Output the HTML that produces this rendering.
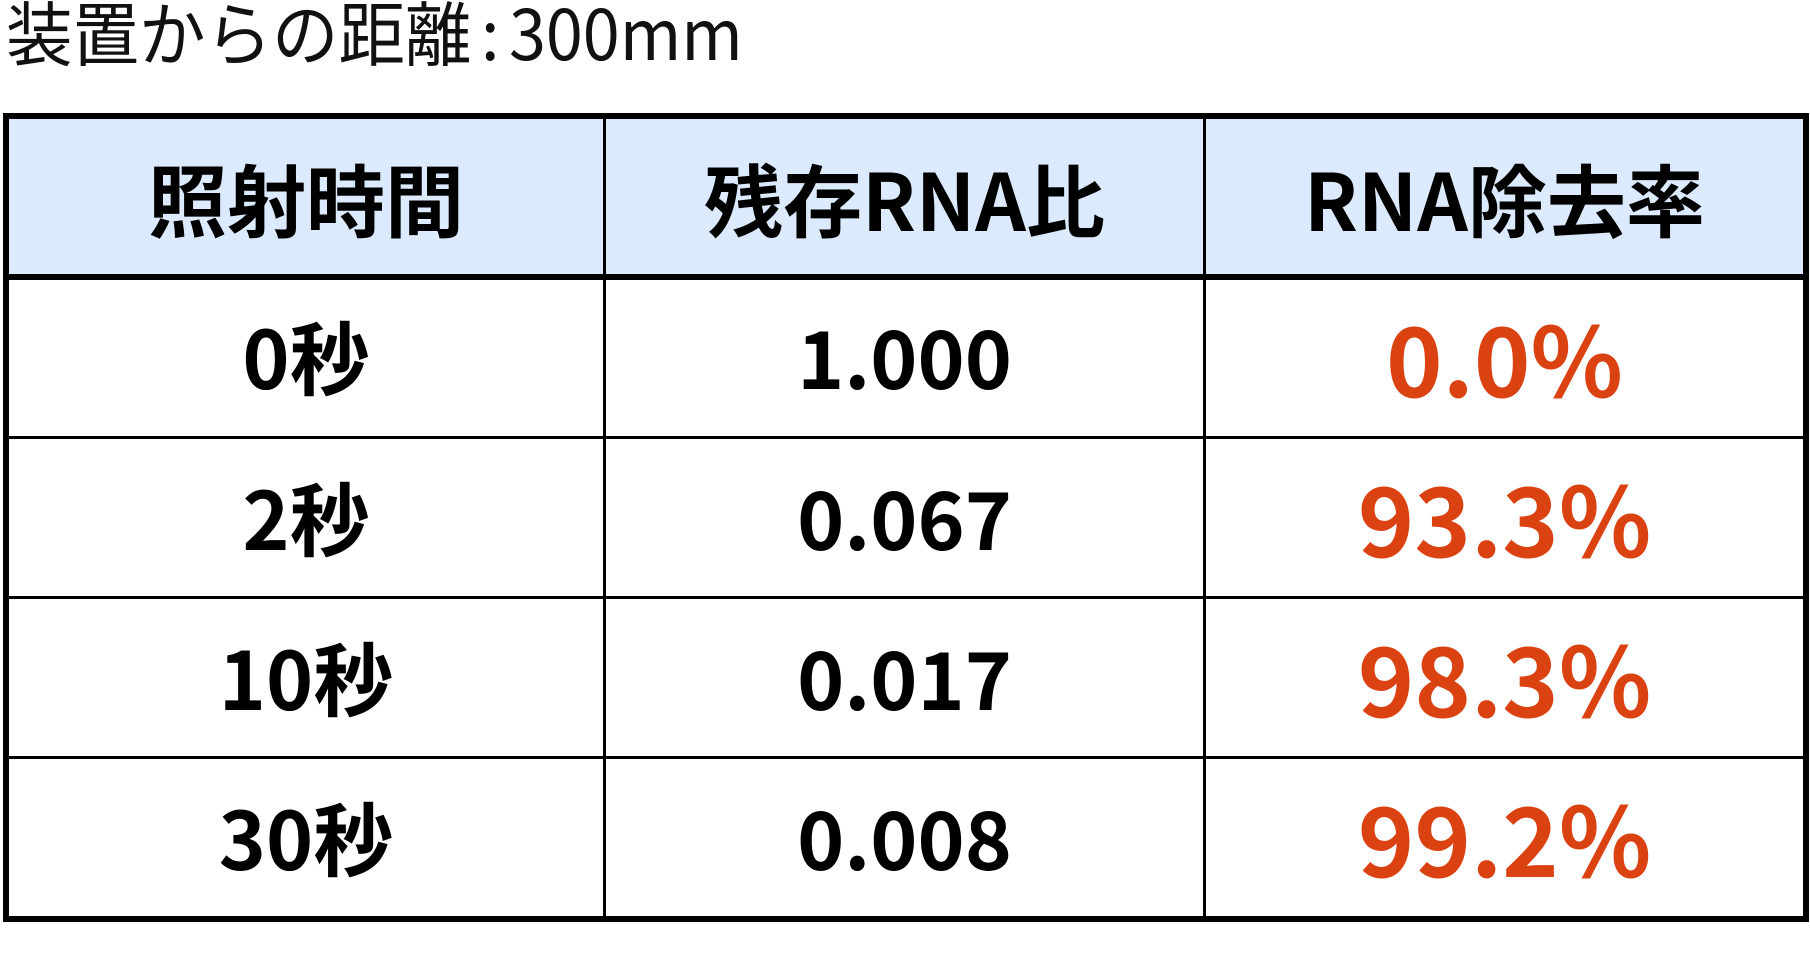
<!DOCTYPE html>
<html><head><meta charset="utf-8"><style>
html,body{margin:0;padding:0;background:#fff;width:1810px;height:975px;overflow:hidden;font-family:"Noto Sans CJK JP","Liberation Sans",sans-serif;}
.title{position:absolute;left:6px;top:-19px;font-size:70px;font-weight:400;color:#111;letter-spacing:0px;line-height:100px;transform:scaleX(0.95);transform-origin:left top;white-space:nowrap;}
.title i{font-style:normal;margin:0 10px;}
.box{position:absolute;left:3px;top:113px;width:1806px;height:809px;border:6px solid #000;box-sizing:border-box;}
.hdr{position:absolute;left:0;top:0;width:100%;height:161px;background:#dbeafc;border-bottom:6px solid #000;box-sizing:border-box;}
.v{position:absolute;top:0;bottom:0;width:3px;background:#000;}
.h{position:absolute;left:0;right:0;height:3px;background:#000;}
.c{position:absolute;display:flex;align-items:center;justify-content:center;font-weight:700;color:#000;}
.c span{display:inline-block;}
.r{color:#db4212;font-weight:700;font-size:96px;}
.b{font-size:80px;}
.hd{font-size:79px;}
</style></head><body>
<div class="title">装置からの距離<i>:</i>300mm</div>
<div class="box">
<div class="hdr"></div>
<div class="v" style="left:594px"></div>
<div class="v" style="left:1194px"></div>
<div class="h" style="top:317px"></div>
<div class="h" style="top:477px"></div>
<div class="h" style="top:637px"></div>

<div class="c hd" style="left:0;top:0;width:594px;height:155px"><span>照射時間</span></div>
<div class="c hd" style="left:597px;top:0;width:597px;height:155px"><span>残存RNA比</span></div>
<div class="c hd" style="left:1197px;top:0;width:597px;height:155px"><span>RNA除去率</span></div>

<div class="c b" style="left:0;top:158px;width:594px;height:156px"><span>0秒</span></div>
<div class="c b" style="left:597px;top:158px;width:597px;height:156px"><span>1.000</span></div>
<div class="c r" style="left:1197px;top:158px;width:597px;height:156px"><span>0.0%</span></div>

<div class="c b" style="left:0;top:318px;width:594px;height:157px"><span>2秒</span></div>
<div class="c b" style="left:597px;top:318px;width:597px;height:157px"><span>0.067</span></div>
<div class="c r" style="left:1197px;top:318px;width:597px;height:157px"><span>93.3%</span></div>

<div class="c b" style="left:0;top:478px;width:594px;height:157px"><span>10秒</span></div>
<div class="c b" style="left:597px;top:478px;width:597px;height:157px"><span>0.017</span></div>
<div class="c r" style="left:1197px;top:478px;width:597px;height:157px"><span>98.3%</span></div>

<div class="c b" style="left:0;top:638px;width:594px;height:157px"><span>30秒</span></div>
<div class="c b" style="left:597px;top:638px;width:597px;height:157px"><span>0.008</span></div>
<div class="c r" style="left:1197px;top:638px;width:597px;height:157px"><span>99.2%</span></div>
</div>
</body></html>
